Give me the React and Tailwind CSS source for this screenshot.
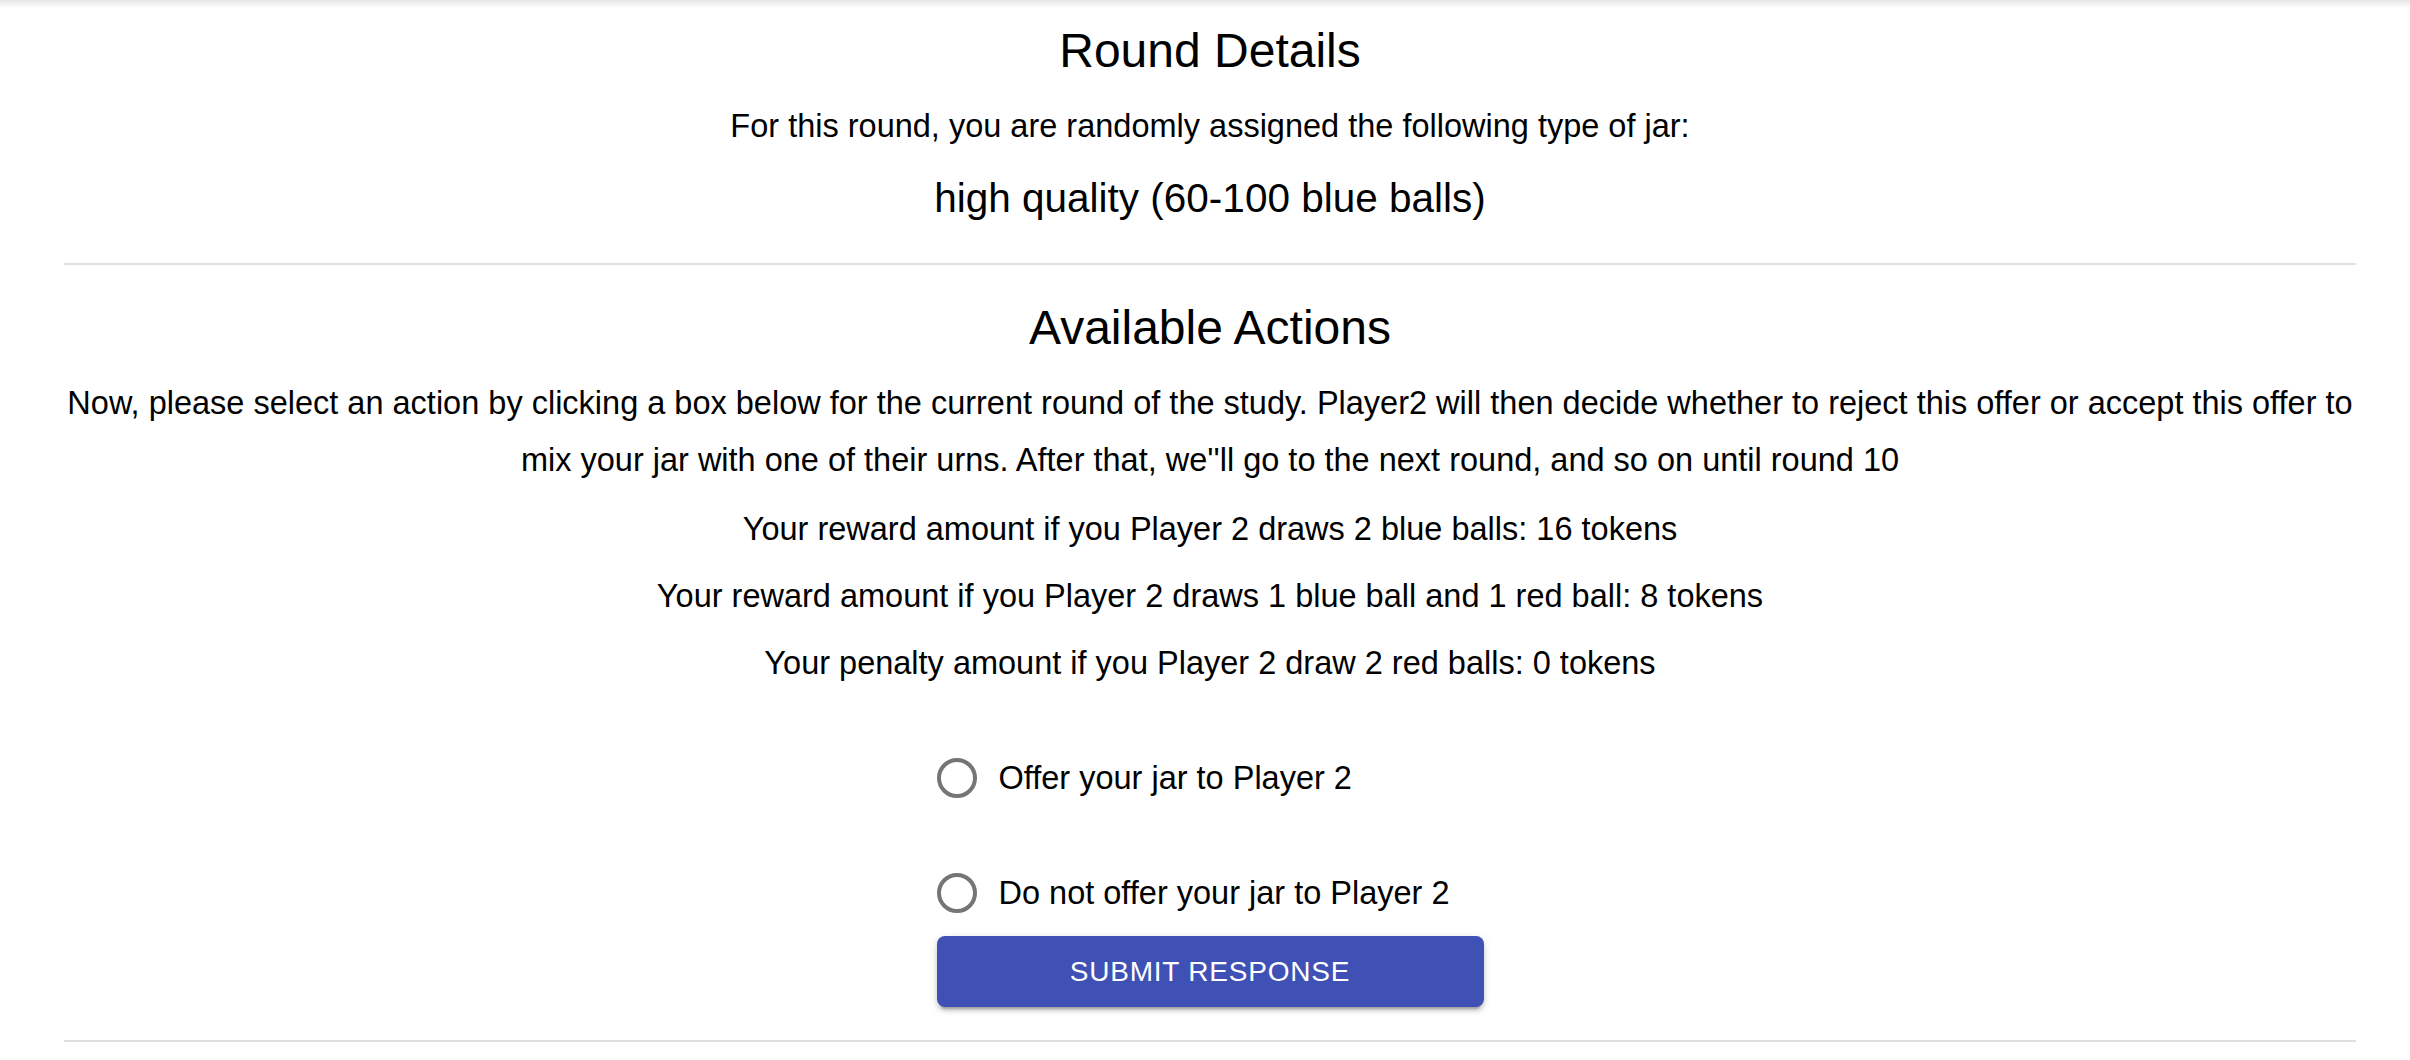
import { useState } from 'react';

const font = { fontFamily: '"Liberation Sans", Arial, Helvetica, sans-serif' };

const options = [
  { id: 'offer', label: 'Offer your jar to Player 2' },
  { id: 'no-offer', label: 'Do not offer your jar to Player 2' },
];

const RadioRow = ({ label, checked, onClick, className }) => (
  <button
    type="button"
    onClick={onClick}
    className={`flex items-center h-[84px] -ml-[22px] text-left ${className}`}
  >
    <span className="w-[84px] h-[84px] flex items-center justify-center shrink-0">
      <span
        className={`w-[40px] h-[40px] rounded-full border-[4px] flex items-center justify-center ${
          checked ? 'border-[#3f51b5]' : 'border-[#757575]'
        }`}
      >
        {checked && <span className="w-[20px] h-[20px] rounded-full bg-[#3f51b5]" />}
      </span>
    </span>
    <span className="text-[32.5px] leading-[48px] text-black">{label}</span>
  </button>
);

const App = () => {
  const [choice, setChoice] = useState(null);

  return (
    <div className="min-h-screen bg-white text-black" style={font}>
      {/* app bar shadow peeking in from above */}
      <div className="h-[8px] bg-gradient-to-b from-[#e6e6e6] to-white" />

      <div className="pl-[32px] pr-[22px] text-center">
        {/* --- ROUND DETAILS --- */}
        <h2 className="mt-[11px] text-[48px] leading-[64px]">Round Details</h2>
        <p className="mt-[19px] text-[32.5px] leading-[48px]">
          For this round, you are randomly assigned the following type of jar:
        </p>
        <p className="mt-[20px] text-[40.5px] leading-[56px]">high quality (60-100 blue balls)</p>

        <hr className="mt-[37px] mx-[32px] h-[2px] border-0 bg-[#e0e0e0]" />

        {/* --- AVAILABLE ACTIONS --- */}
        <h2 className="mt-[31px] text-[48px] leading-[64px]">Available Actions</h2>
        <p className="mt-[15px] mx-auto max-w-[2322px] text-[32.5px] leading-[57px]">
          Now, please select an action by clicking a box below for the current round of the study. Player2 will
          then decide whether to reject this offer or accept this offer to mix your jar with one of their urns.
          After that, we''ll go to the next round, and so on until round 10
        </p>
        <p className="mt-[16px] text-[32.5px] leading-[48px]">
          Your reward amount if you Player 2 draws 2 blue balls: 16 tokens
        </p>
        <p className="mt-[19px] text-[32.5px] leading-[48px]">
          Your reward amount if you Player 2 draws 1 blue ball and 1 red ball: 8 tokens
        </p>
        <p className="mt-[19px] text-[32.5px] leading-[48px]">
          Your penalty amount if you Player 2 draw 2 red balls: 0 tokens
        </p>

        {/* --- RADIO GROUP + SUBMIT --- */}
        <div className="mx-auto w-[547px] flex flex-col items-start">
          <RadioRow
            label={options[0].label}
            checked={choice === options[0].id}
            onClick={() => setChoice(options[0].id)}
            className="mt-[49px]"
          />
          <RadioRow
            label={options[1].label}
            checked={choice === options[1].id}
            onClick={() => setChoice(options[1].id)}
            className="mt-[31px]"
          />
          <button
            type="button"
            className="mt-[1px] w-full h-[71px] rounded-[8px] bg-[#3f51b5] text-white text-[28px] font-medium tracking-[0.8px] uppercase shadow-[0_6px_2px_-4px_rgba(0,0,0,0.2),0_4px_4px_0_rgba(0,0,0,0.14),0_2px_10px_0_rgba(0,0,0,0.12)] hover:bg-[#303f9f]"
          >
            Submit Response
          </button>
        </div>

        <hr className="mt-[33px] mx-[32px] h-[2px] border-0 bg-[#e0e0e0]" />
      </div>
    </div>
  );
};

export default App;
